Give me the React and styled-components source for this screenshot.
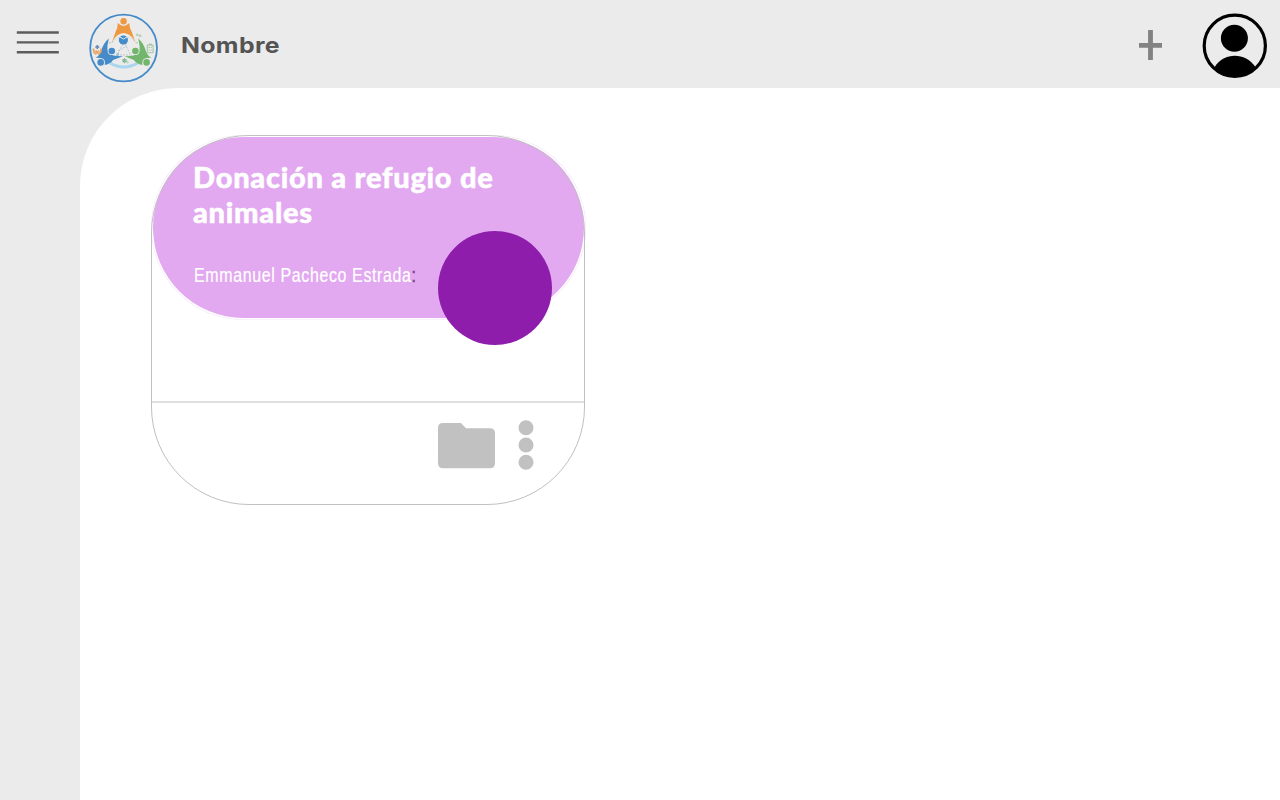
import React from "react";
import styled, { createGlobalStyle } from "styled-components";

const GlobalStyle = createGlobalStyle`
  * { box-sizing: border-box; }
  body { margin: 0; background: #ebebeb; overflow: hidden; }
  h1, h2, p { margin: 0; }
`;

const Page = styled.div`
  display: flex;
  flex-direction: column;
  height: 100vh;
  background: #ebebeb;
`;

const Header = styled.header`
  display: flex;
  align-items: flex-start;
  flex: 0 0 88px;
  padding: 13px 13px 0 16px;
`;

const IconButton = styled.button`
  display: flex;
  padding: 0;
  border: 0;
  background: none;
  margin: ${(p) => p.$margin || "0"};
  svg { display: block; }
`;

const Brand = styled.h1`
  flex: 1;
  margin: 17px 0 0 22px;
  color: #545454;
  font: 700 22px/30px Inter, sans-serif;
  letter-spacing: 0.3px;
  transform: scaleX(1.13);
  transform-origin: left;
`;

const Main = styled.main`
  flex: 1;
  margin-left: 80px;
  padding: 47px 0 0 71px;
  background: #fff;
  border-top-left-radius: 98px;
`;

const Card = styled.article`
  position: relative;
  display: flex;
  flex-direction: column;
  width: 434px;
  height: 370px;
  padding: 2px 1px 0 2px;

  &::after {
    content: "";
    position: absolute;
    inset: 0;
    border: 1px solid #c0c0c0;
    border-radius: 98px;
    pointer-events: none;
  }
`;

const Banner = styled.div`
  display: flex;
  flex-direction: column;
  justify-content: space-between;
  height: 181px;
  padding: 22px 40px 31px;
  border-radius: 91px;
  background: #e2a9f0;
  box-shadow: 0 0 0 1.5px #fff, 0 0 0 2px #f4e3f9;
`;

const Title = styled.h2`
  color: #fff;
  font: 900 29px/35px Lato, sans-serif;
  letter-spacing: 0.75px;
  -webkit-text-stroke: 0.5px #fff;
  white-space: nowrap;
`;

const Owner = styled.p`
  align-self: flex-start;
  margin-left: 1px;
  color: #fff;
  font: 400 20px/24px "Liberation Sans Narrow", "Liberation Sans", sans-serif;
  letter-spacing: 0.8px;
  -webkit-text-stroke: 0.2px;
  white-space: nowrap;
  transform: scaleX(0.798);
  transform-origin: left;
  span { color: #7b4b86; -webkit-text-stroke: 0.6px; }
`;

const Avatar = styled.div`
  position: absolute;
  left: 287px;
  top: 96px;
  width: 114px;
  height: 114px;
  border-radius: 50%;
  background: #8e1dac;
`;

const CardFooter = styled.footer`
  display: flex;
  justify-content: flex-end;
  align-items: flex-start;
  gap: 23px;
  height: 103px;
  margin: 83px 0 0 -1px;
  padding: 17px 50.5px 0 0;
  border-top: 2px solid #dfdfdf;
`;

const Person = ({ x, y, r, color }) => <circle cx={x} cy={y} r={r} fill={color} />;

const Logo = () => (
  <svg width="70" height="70" viewBox="0 0 70 70" fill="none">
    <circle cx="34.6" cy="35" r="33.4" stroke="#458ac9" strokeWidth="1.8" />
    <path d="M21 50Q34.5 58 49 50" stroke="#a9d5ef" strokeWidth="2.8" />
    <path d="M23 30Q28 23 34.6 24Q43 23 47 30" stroke="#b6d4d2" strokeWidth=".8" strokeDasharray="2 1.5" />
    <path d="M34 31 27 44M36 31l7 13M28 42h13M29 38l9-5" stroke="#a9b9c5" strokeWidth=".7" strokeDasharray="2 1" />
    <path d="M28.8 10Q34.5 16 40.2 10Q40.5 15 42.8 19L46.8 30.5Q43.5 23 39.5 21.5Q34.6 18.5 29.8 21.5Q26 23 22.6 30.5L26.5 19Q28.8 15 28.8 10Z" fill="#ee9841" />
    <circle cx="34.6" cy="8.2" r="4" fill="#ebebeb" />
    <Person x={34.6} y={8.2} r={3.2} color="#ee9841" />
    <circle cx="34.4" cy="27" r="4.6" fill="#458ac9" />
    <path d="m31 24 3.5 2 3.5-2" stroke="#e1edf6" strokeWidth="1" />
    <path d="M19.8 25.5Q14.5 30 12.5 37Q11 42 6.5 45Q15 43.5 15.8 52Q22 50.5 24 47L34 43.2Q26 43.5 21 41.5Q18 39 18.4 33Z" fill="#458ac9" />
    <path d="M49.2 25.5Q54.5 30 56.5 37Q58 42 62.5 45Q54 43.5 53.2 52Q47 50.5 45 47L35.5 43.2Q43 43.5 48 41.5Q51 39 50.6 33Z" fill="#72b66d" />
    <circle cx="22.8" cy="38" r="4.1" fill="#ebebeb" />
    <circle cx="46.4" cy="38" r="4.1" fill="#ebebeb" />
    <circle cx="11.7" cy="49.4" r="4.1" fill="#ebebeb" />
    <circle cx="57.6" cy="49.4" r="4.1" fill="#ebebeb" />
    <Person x={22.8} y={38} r={3.3} color="#458ac9" />
    <Person x={46.4} y={38} r={3.3} color="#72b66d" />
    <Person x={11.7} y={49.4} r={3.3} color="#458ac9" />
    <Person x={57.6} y={49.4} r={3.3} color="#72b66d" />
    <path d="M4.5 35.5Q4.5 40.5 7.5 41M12.2 35.5Q12.2 40.5 9 41M6.5 37.5l1.7 2 1.7-2" stroke="#e8a462" strokeWidth="1.8" />
    <path d="M8.3 32v4M6.3 34h4" stroke="#6387bb" strokeWidth="1.6" />
    <path d="M58.3 32.2h5.8v7.5h-5.8zM60 32v-1h2.5v1M59.5 34.5h1.5m1 0h1M59.5 37h1.5m1 0h1" stroke="#91bd91" strokeWidth=".8" />
    <circle cx="35.5" cy="47.7" r="1.5" stroke="#73ad8d" />
    <path d="M35.5 45v5.4M33.1 46.4l4.8 2.7M33.1 49l4.8-2.7" stroke="#73ad8d" strokeWidth=".6" />
    <circle cx="38.5" cy="49.2" r=".8" stroke="#91bd91" strokeWidth=".6" />
    <circle cx="48.2" cy="21.7" r=".9" stroke="#91bd91" strokeWidth=".7" />
    <circle cx="51" cy="22.8" r="1" stroke="#91bd91" strokeWidth=".7" />
    <circle cx="28.6" cy="41.5" r="1" stroke="#73a8d5" strokeWidth=".7" />
    <circle cx="21" cy="29.8" r=".7" fill="#91bd91" /><circle cx="48" cy="29.8" r=".7" fill="#91bd91" />
  </svg>
);

export default function App() {
  return (
    <>
      <GlobalStyle />
      <Page>
        <Header>
          <IconButton $margin="17px 30px 0 0" aria-label="Menú">
            <svg width="43" height="25" viewBox="0 0 43 25" stroke="#5c5c5c" strokeWidth="2.4">
              <path d="M.8 2.5h42M.8 12.4h42M.8 22.3h42" />
            </svg>
          </IconButton>
          <Logo />
          <Brand>Nombre</Brand>
          <IconButton $margin="17px 40px 0 0" aria-label="Agregar">
            <svg width="24" height="30" viewBox="0 0 24 30" stroke="#828282" strokeWidth="4.8">
              <path d="M1 15.3h23M12.5 0v30" />
            </svg>
          </IconButton>
          <IconButton aria-label="Perfil">
            <svg width="65" height="66" viewBox="0 0 65 66">
              <circle cx="32.8" cy="32.8" r="30.6" fill="none" stroke="#000" strokeWidth="3.2" />
              <circle cx="32.4" cy="25.2" r="13.5" />
              <path d="M12.8 53.8C22 39 43.5 39 53.2 53.8C46 66.5 20 68 12.8 53.8Z" />
            </svg>
          </IconButton>
        </Header>
        <Main>
          <Card>
            <Banner>
              <Title>Donación a refugio de<br />animales</Title>
              <Owner>Emmanuel Pacheco Estrada<span>:</span></Owner>
            </Banner>
            <Avatar />
            <CardFooter>
              <IconButton $margin="3px 0 0" aria-label="Carpeta">
                <svg width="57" height="46" viewBox="0 0 57 46" fill="#c1c1c1">
                  <path d="M5 0h18l5 5.3h24q5 0 5 5V40q0 5.3-5 5.3H5q-5 0-5-5.3V5q0-5 5-5Z" />
                </svg>
              </IconButton>
              <IconButton aria-label="Más opciones">
                <svg width="16" height="50" viewBox="0 0 16 50" fill="#c1c1c1">
                  <circle cx="8" cy="7.7" r="7.5" />
                  <circle cx="8" cy="25" r="7.5" />
                  <circle cx="8" cy="42.3" r="7.5" />
                </svg>
              </IconButton>
            </CardFooter>
          </Card>
        </Main>
      </Page>
    </>
  );
}
